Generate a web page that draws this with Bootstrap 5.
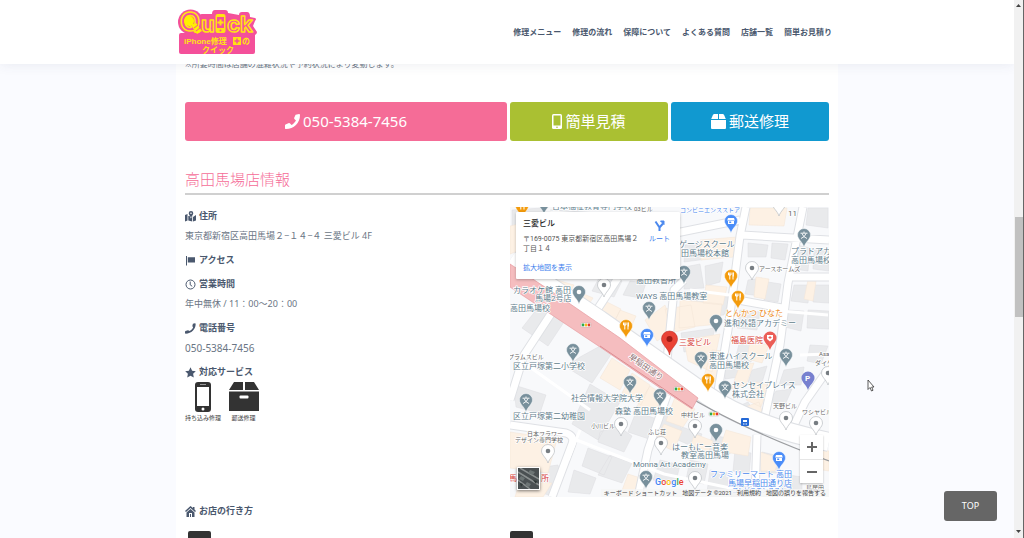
<!DOCTYPE html>
<html lang="ja">
<head>
<meta charset="utf-8">
<meta name="viewport" content="width=device-width, initial-scale=1">
<title>高田馬場店 | iPhone修理のクイック</title>
<link href="https://cdn.jsdelivr.net/npm/bootstrap@5.3.0/dist/css/bootstrap.min.css" rel="stylesheet">
<style>
  :root { --ink: #4a586e; --body: #6a7584; --pink: #f56c97; }
  body { font-family: "Noto Sans", "Noto Sans CJK JP", sans-serif; background: #fafbff; color: var(--body); font-size: 9px; line-height: 20px; }
  a { text-decoration: none; }
  .site-width { width: 100%; max-width: 662px; margin-left: auto; margin-right: auto; }
  .page-frame { height: 100vh; overflow: hidden; padding-right: 10px; }
  .site-header { background: #fff; height: 64px; box-shadow: 0 0 12px rgba(60,70,100,.1); z-index: 5; flex: none; }
  .site-bar { padding-right: 6px; }
  .site-nav { gap: 11px; }
  .site-nav a { color: var(--ink); font-size: 8px; font-weight: 700; white-space: nowrap; }
  .sheet { background: #fff; padding: 0 9px; margin-top: -10px; flex: 1 0 auto; }
  .notice { font-size: 8px; }
  .halves { display: flex; gap: 3px; }
  .halves > :first-child { flex: 0 0 50%; }
  .halves > :not(:first-child) { flex: 1 1 0; min-width: 0; }
  .cta-row { margin-top: 28px; }
  .cta { height: 39px; border: 0; border-radius: 3px; color: #fff; font-size: 15px; gap: 3px; padding: 0; }
  .cta:hover { color: #fff; }
  .cta-tel { background: var(--pink); }
  .cta-quote { background: #aac032; }
  .cta-post { background: #1199d0; }
  .shop-title { color: var(--pink); font-size: 15px; font-weight: 300; line-height: 28px; margin: 24px 0 0; border-bottom: 2px solid #d0d0d0; }
  .facts { padding-top: 7px; }
  .facts h3, .way h3 { display: flex; align-items: center; gap: 3px; font-size: 9px; line-height: 20px; font-weight: 700; color: var(--ink); margin: 4px 0 0; }
  .facts h3 svg, .way h3 svg { width: 11px; height: 11px; margin-top: 1px; }
  .facts p { margin: 0; }
  .facts .tel-no { font-size: 10px; }
  .services { gap: 6px; }
  .service { width: 35px; font-size: 6px; line-height: 12px; white-space: nowrap; text-align: center; color: #444; }
  .service svg { display: block; width: 30px; height: 30px; margin: 0 auto; }
  .map-box { height: 290px; margin-top: 12px; overflow: hidden; background: #f8f9fb; font-family: Roboto, "Noto Sans CJK JP", sans-serif; }
  .map-box > svg { width: 100%; height: 100%; display: block; }
  .place { left: 6px; top: 5px; width: 164px; height: 67px; background: #fff; border-radius: 1px; box-shadow: 0 1px 3px rgba(0,0,0,.25); font-size: 7px; line-height: 10px; color: #555; padding: 6px 7px; }
  .place strong { display: block; font-size: 8px; line-height: 12px; font-weight: 500; color: #222; }
  .place address { width: 118px; margin: 4px 0 9px; line-height: 10px; }
  .place a { color: #3b7ded; }
  .route { right: 10px; top: 8px; text-align: center; }
  .route svg { display: block; width: 11px; height: 11px; margin: 0 auto 3px; }
  .zoomer { right: 6px; bottom: 14px; width: 23px; background: #fff; box-shadow: 0 1px 2px rgba(0,0,0,.25); }
  .zoomer button { border: 0; background: none; height: 24px; padding: 0; display: flex; align-items: center; justify-content: center; width: 100%; }
  .zoomer button + button { border-top: 1px solid #e6e6e6; }
  .sat { left: 7px; bottom: 7px; width: 23px; height: 23px; padding: 0; border: 1px solid #fff; box-shadow: 0 1px 3px rgba(0,0,0,.5); }
  .sat svg { display: block; width: 100%; height: 100%; }
  .legal { right: 0; bottom: 0; font-size: 6px; line-height: 8px; gap: 5px; padding: 0 3px; background: rgba(245,245,245,.75); white-space: nowrap; }
  .legal a, .legal span, .legal button { color: #444; border: 0; background: none; padding: 0; }
  .way { min-height: 48px; }
  .step { width: 23px; height: 12px; border-radius: 2px; background: #333; margin-left: 3px; }
  .step-row { margin-top: 10px; }
  .step-row .halves > :last-child .step { margin-left: 0; }
  .to-top { position: fixed; right: 27px; bottom: 17px; width: 53px; height: 30px; border: 0; border-radius: 3px; background: #666; color: #fff; font-size: 9px; padding: 0; }
  .scroll-track { position: fixed; top: 0; right: 0; width: 10px; height: 100vh; background: #f1f1f1; border-right: 1px solid #666; z-index: 6; }
  .scroll-thumb { position: absolute; top: 40.4%; height: 18.6%; left: 1px; right: 0; background: #c1c1c1; }
  .scroll-track svg { position: absolute; left: 2px; width: 5px; height: 4px; }
  .scroll-track .arrow-up { top: 4px; }
  .scroll-track .arrow-down { bottom: 4px; }
  .pointer { position: fixed; left: 84.7%; top: 70.4%; width: 8px; height: 13px; }
</style>
</head>
<body>
<div class="page-frame d-flex flex-column">
  <header class="site-header position-relative">
    <div class="site-width site-bar h-100 d-flex align-items-center justify-content-between">
      <a href="#" aria-label="Quick iPhone修理のクイック">
        <svg class="d-block" width="82" height="48" viewBox="0 0 82 48">
          <g fill="#f4509a">
            <circle cx="14.500" cy="14" r="12.500"/>
            <rect x="3" y="25" width="76" height="21" rx="2"/>
            <path d="M24 7q0-1 2-1h10q0-4 3-4h10q3 0 3 3l11 2q0-3 3-3h5q3 0 3 5l5 1q2 1 0 3l-2 5 4 6q0 2-2 3H22z"/>
          </g>
          <g font-family="Inter, sans-serif" font-weight="700" fill="#f4509a" stroke="#ffe312" stroke-width="1.500" stroke-linejoin="round">
            <text x="4" y="23" font-size="26">Q</text>
            <text x="25" y="24" font-size="22">u</text>
            <text x="51" y="24" font-size="22">c</text>
            <text x="64" y="24" font-size="22">k</text>
          </g>
          <circle cx="13" cy="13" r="5" fill="#fff000"/><path d="m15 17 5-2 6 8-5 3z" fill="#fff000"/><path d="m18 20 4-3M20 23l4-3" stroke="#f4509a"/>
          <rect x="39.500" y="6" width="10" height="19" rx="2" fill="#ffe312"/><rect x="41" y="9" width="7" height="11" fill="#f4509a"/><path d="M44.500 11.500v6M41.500 14.500h6" stroke="#ffe312" stroke-width="2"/><circle cx="44.500" cy="22.500" r="1" fill="#f4509a"/>
          <g font-family="'Liberation Sans', 'Noto Sans CJK JP', sans-serif" font-weight="700" fill="#ffe312">
            <text x="8" y="36" font-size="8">iPhone修理</text><text x="66" y="36" font-size="8">の</text>
            <text x="26" y="45" font-size="8">クイック</text>
          </g>
          <rect x="57" y="29" width="8" height="8" fill="#ffe312"/><path d="M61 30.500v5M58.500 33h5" stroke="#f4509a" stroke-width="1.500"/>
        </svg>
      </a>
      <nav class="site-nav d-flex">
        <a href="#">修理メニュー</a><a href="#">修理の流れ</a><a href="#">保障について</a><a href="#">よくある質問</a><a href="#">店舗一覧</a><a href="#">簡単お見積り</a>
      </nav>
    </div>
  </header>

  <main class="site-width sheet">
    <p class="notice m-0">※所要時間は店舗の混雑状況や予約状況により変動します。</p>

    <div class="halves cta-row">
      <a class="btn cta cta-tel d-flex align-items-center justify-content-center" href="tel:050-5384-7456">
        <svg width="15" height="15" viewBox="0 0 16 16" fill="#fff"><path d="M11.300.8 15 0q1 0 1 1C16 9.500 9.500 16 1 16q-.8 0-1-.9l-.1-3 .6-1 3.700-1.500 1 .3 1.700 1.800c2-1.100 3.700-2.800 4.800-4.800L10 5.200l-.3-1z"/></svg>
        050-5384-7456</a>
      <a class="btn cta cta-quote d-flex align-items-center justify-content-center" href="#">
        <svg width="10" height="15" viewBox="0 0 10 15"><rect width="10" height="15" rx="1.500" fill="#fff"/><path d="M1.500 1.500h7v10h-7z" fill="#aac032"/><circle cx="5" cy="13.200" r=".8" fill="#aac032"/></svg>
        簡単見積</a>
      <a class="btn cta cta-post d-flex align-items-center justify-content-center" href="#">
        <svg width="15" height="15" viewBox="0 0 15 15" fill="#fff"><path d="M3 0h4v5H.2L2 .7zM8 0h4l1 .7L14.800 5H8zM0 6h15v8q0 1-1 1H1q-1 0-1-1z"/></svg>
        郵送修理</a>
    </div>

    <h2 class="shop-title">高田馬場店情報</h2>

    <div class="halves">
      <section class="facts">
        <h3><svg viewBox="0 0 11 11" fill="#4a586e"><path d="M0 4 2.500 3v6.500L0 10.500zM3.300 5h1.300l1.300 2.500L7.200 5v5.400L3.300 9.500zM8 6l3-2v5.500l-3 1z"/><path d="M6 0a2.300 2.300 0 0 1 2.300 2.300Q8 4.500 6 6.500 4 4.500 3.700 2.300A2.300 2.300 0 0 1 6 0zm0 1.500a.8.8 0 1 0 0 1.600.8.800 0 0 0 0-1.600z" fill-rule="evenodd"/></svg>住所</h3>
        <p>東京都新宿区高田馬場２−１４−４ 三愛ビル 4F</p>
        <h3><svg viewBox="0 0 11 11" fill="#4a586e"><path d="M1 1h1v9.500H1zM2.800 2.200h7.200v5.300H2.800z"/></svg>アクセス</h3>
        <h3><svg viewBox="0 0 11 11" fill="none" stroke="#4a586e"><circle cx="5.500" cy="5.500" r="4.500"/><path d="M5.200 2.500v3.300l2 1.500"/></svg>営業時間</h3>
        <p>年中無休 / 11：00～20：00</p>
        <h3><svg viewBox="0 0 16 16" fill="#4a586e"><path d="m11.500 1 3-.7q1 0 1 1C15.500 9 9.500 15 1 15.500q-.8 0-1-.9v-2l.6-1 3.700-1 1 .3 1.500.8c2.200-1.100 4-2.900 5-5L11 5.200l-.3-1z"/></svg>電話番号</h3>
        <p class="tel-no">050-5384-7456</p>
        <h3><svg viewBox="0 0 11 11" fill="#4a586e"><path d="m5.500.3 1.600 3.400 3.700.5-2.700 2.600.7 3.700-3.300-1.800-3.300 1.800.7-3.700L.2 4.200l3.700-.5z"/></svg>対応サービス</h3>
        <div class="services d-flex">
          <div class="service"><svg viewBox="0 0 30 30"><rect x="7" y="0" width="16" height="30" rx="3" fill="#333"/><path d="M9 5h12v19H9z" fill="#fff"/><path d="M12 2.500h6" stroke="#999"/><circle cx="15" cy="27" r="1.500" fill="#fff"/></svg>持ち込み修理</div>
          <div class="service"><svg viewBox="0 0 30 30"><path d="M5 0h9v8H0zM16 0h9l5 8H16zM0 9.500h30V29H0z" fill="#333"/><rect x="10.500" y="13.500" width="9" height="3" rx="1" fill="#fff"/></svg>郵送修理</div>
        </div>
      </section>

      <div class="map-box position-relative">
        <svg viewBox="510 207 319 290" preserveAspectRatio="xMidYMid slice" role="img" aria-label="三愛ビル周辺の地図">
          <defs>
            <path id="drop" d="M0-6.500A6.500 6.500 0 0 1 6.500 0C6.500 4 1.500 7 0 12-1.500 7-6.500 4-6.500 0A6.500 6.500 0 0 1 0-6.500z"/>
            <g id="school"><use href="#drop" fill="#78909c" stroke="#fff" stroke-width=".5"/><path d="M0-3.500v1.500M-3.500-1.800h7M-2-1.500q1 3.500 5 5M2-1.500q-1 3.500-5 5" stroke="#fff" stroke-width=".9" fill="none"/></g>
            <g id="spot"><use href="#drop" fill="#78909c" stroke="#fff" stroke-width=".5"/><circle r="2.300" fill="#fff"/></g>
            <g id="plain"><use href="#drop" fill="#fff" stroke="#b9bdc1" stroke-width=".7"/><circle r="2.300" fill="#777d82"/></g>
            <g id="food"><use href="#drop" fill="#f39b0c" stroke="#fff" stroke-width=".5"/><path d="M-2.500-3.500v2.500h2.500v-2.500M-1.200-3.500v7M2-3.500v7M2.300-3.500v4" stroke="#fff" fill="none"/></g>
            <g id="store"><use href="#drop" fill="#4b8df8" stroke="#fff" stroke-width=".5"/><path d="M-3-3h6l.8 2.500h-7.600zM-3 0h6v3h-6z" fill="#fff"/><path d="M-1.800.5h2v1.500h-2z" fill="#4b8df8"/></g>
            <g id="signal"><rect x="-5" y="-2" width="10" height="4" rx="1" fill="#fff" stroke="#aaa" stroke-width=".4"/><circle cx="-3" r="1.400" fill="#2da94f"/><circle r="1.400" fill="#f6b91c"/><circle cx="3" r="1.400" fill="#e5372c"/></g>
          </defs>
          <path fill="#f8f9fb" d="M510 207h319v290H510z"/>
          <g fill="#e9eaec" stroke="#dcdde0" stroke-width=".5">
            <path d="m540 305 24 17-16 24-26-18zM580 357l22-12 10 8-20 30-26-16zM514 385l32 10-6 18-24-6zM512 210l30-2 2 14-32 4zM590 384l30 18-22 38-26-16zM636 412l24 8-8 20-24-8zM600 432l18-6 14 10-8 16-26-10zM588 448l24 9-8 18-22-9zM574 470l22 8-6 16-22-2zM610 455l22 8-10 20-24-8zM536 468l22-3 3 14-12 16-15-4z"/>
            <path d="m685 245 40-6-3 18-38 5zM684 267l16-3 4 24-20 1zM705 266l18-4-3 20-14 4zM690 295l40 2-6 18-34 3zM681 333l34-5-5 20-26 4zM748 243l20 2-2 12-18 0zM772 243l16 1-3 16-14-2zM748 280l14-2-2 18-15-2zM768 282l13 2-3 18-14-2zM740 310l20 2-3 18-20-2zM740 340l16 2-5 20-16-2zM752 370l15-4-6 20-13-4z"/>
            <path d="m808 208 20 0v20l-22-3zM797 245l13 3-2 23-14-2zM814 250l15 1v20l-16-2zM794 285l16 0-2 18-17-2zM814 285l15 0v18l-16-1zM788 310l16 1-3 20-16-4zM808 310l21 1v18l-22-1zM784 370l20-3-3 18-22 0zM810 345l18 1-7 18-14-3zM776 391l16-2-8 18-15-5zM730 410l18-8 8 13-11 7zM724 365l18-4-3 16-14 2zM664 410l20 5-5 20-23-10zM682 427l20 7-6 14-18-8zM712 435l20 4-2 15-22-3zM735 450l16 3-2 22-16-4zM762 452l17 4-2 17-16 0zM782 474l20 3v18l-21-1zM660 460l20 5-5 20-22-5zM690 460l18 4-4 20-18-4zM710 470l18 3-1 20-20-1zM733 480l18 2v15l-20 0zM600 276l22 5-8 16-22-6zM630 281l16 2-5 15-18-3z"/>
          </g>
          <g fill="#fdf1e4" stroke="#f3e5d6" stroke-width=".5">
            <path d="m510 226 18-4 10 22-28 10zM550 278l24 7-9 17-23-14zM575 290l18 8-12 18-18-10zM603 300l18 9-12 22-21-12zM620 310l16 6-10 23-17-6zM645 320l20-15 10 24-18 12zM612 358l18 12-10 20-20-12zM632 373l18 12-9 20-19-12zM650 386l15 10-13 18-15-8zM665 309l26-4 4 22-24 6zM706 285l21 2-4 18-20-2zM680 300l42 4-3 20-40 4zM684 340l36-6-8 38-24-11zM750 208l37 0-3 18-35-1zM700 240l37-3-3 20-33 3zM756 277l13 2-4 20-11-2zM808 280l8 1-3 20-9-2zM750 342l19 3-7 18-15-4zM712 350l14 1-5 30-17-5zM740 365l14-2-8 22-15 4zM756 382l13 3-8 22-15-7zM510 432l47 7-9 34-38-5zM664 424l18 7-8 20-20-9zM695 434l18 7-8 19-17-9zM726 430l25 7-3 19-29-5zM760 452l19 6-4 13-14 0zM807 448l22 3v20l-25-4zM628 474l16 5-4 18-20-1zM675 397l20 12-12 18-17-6zM745 407l14-5 7 20-12 3zM520 480l32 3-9 14h-28z"/>
          </g>
          <g fill="none" stroke-linejoin="round">
            <g stroke="#dfe1e5" stroke-width="9">
              <path d="M746 207 740 236 728 330 716 403M803 207 788 283 780 345 763 425M742 235l87 5M792 277h37M738 300l44 8M676 233l64-13M562 297l-38 58-14 45M510 425l56 8q9 3 6 11l-20 53M684 280l-10 10-8 80M667 395l-19 55-10 47M757 435l-2 62M829 368l-24 34-18 38M550 214l130 8M618 278l-25 38"/>
            </g>
            <g stroke="#fff" stroke-width="7">
              <path d="M746 207 740 236 728 330 716 403M803 207 788 283 780 345 763 425M742 235l87 5M792 277h37M738 300l44 8M676 233l64-13M562 297l-38 58-14 45M510 425l56 8q9 3 6 11l-20 53M684 280l-10 10-8 80M667 395l-19 55-10 47M757 435l-2 62M829 368l-24 34-18 38M550 214l130 8M618 278l-25 38"/>
              <path stroke-width="3" d="M574 439l90 35 85 18M690 290l40 5M520 360l70 50M768 310l60 5M580 430l-12 30M800 355l28-1"/>
            </g>
            <path d="M510 260 600 320 667 367 708 396Q750 425 829 442" stroke="#dfe1e5" stroke-width="20"/>
            <path d="M510 260 600 320 667 367 708 396Q750 425 829 442" stroke="#fff" stroke-width="18"/>
            <path d="M665 382Q730 425 829 461" stroke="#9b9da0" stroke-width="1.300"/>
          </g>
          <path d="m510 264 50 33 60 41 78 60-6 11-32-21-60-41-90-60z" fill="#f5bdbf" stroke="#e79ca0" stroke-width=".7"/>
          <path d="m600 346 92 62" stroke="#dc8d92"/>
          <g fill="#5f7d8c" stroke="#fff" stroke-width="1.600" stroke-linejoin="round" paint-order="stroke" font-size="8">
            <text x="552" y="209">日本福祉教育専門学校</text>
            <text x="513" y="293">カラオケ館 高田</text><text x="535" y="301">馬場2号店</text><text x="510" y="311">高田馬場校</text>
            <text x="636" y="299">WAYS 高田馬場教室</text><text x="636" y="283">高田教習所</text>
            <text x="679" y="247">ゲージスクール</text><text x="681" y="256">田馬場校本館</text>
            <text x="791" y="254">プラドアカ</text><text x="791" y="263">高田馬場校</text>
            <text x="724" y="326">進和外語アカデミー</text>
            <text x="513" y="369">区立戸塚第二小学校</text><text x="571" y="401">社会情報大学院大学</text>
            <text x="513" y="419">区立戸塚第二幼稚園</text><text x="615" y="414">森塾 高田馬場校</text>
            <text x="709" y="359">東進ハイスクール</text><text x="709" y="368">高田馬場校</text>
            <text x="732" y="388">センセイプレイス</text><text x="732" y="397">株式会社</text>
            <text x="672" y="450">はーもにー音楽</text><text x="681" y="458">教室高田馬場</text>
            <text x="633" y="467">Monna Art Academy</text>
            <g fill="#666" font-size="6">
              <text x="634" y="211">03ビル</text><text x="759" y="271">アースホームズ</text><text x="508" y="359">プラムスビル</text><text x="591" y="428">小川ビル</text>
              <text x="527" y="436">日本フラワー</text><text x="515" y="442">デザイン専門学校</text><text x="648" y="434">ふじ荘</text><text x="681" y="417">中村ビル</text>
              <text x="773" y="408">天野ビル</text><text x="802" y="414">ワシヤビル</text><text x="819" y="356">Asa</text><text x="815" y="365">ダイケ</text><text x="806" y="490">鳥居田</text><text x="788" y="216" font-size="8">11</text>
            </g>
            <g fill="#d8433b"><text x="679" y="345">三愛ビル</text><text x="731" y="343">福島医院</text><text x="509" y="481">馬場</text><text x="541" y="481">所</text></g>
            <g fill="#ed8a19"><text x="725" y="316">とんかつ ひなた</text></g>
            <g fill="#4b88ee"><text x="680" y="212" font-size="6">コンビニエンスストア</text><text x="710" y="477">ファミリーマート 高田</text><text x="728" y="486">馬場早稲田通り店</text><text x="732" y="492" font-size="6">コンビニエンスストア</text></g>
            <text transform="translate(628 358) rotate(35)" fill="#8a6d70">早稲田通り</text>
          </g>
          <use href="#food" x="522" y="206"/><use href="#school" x="544" y="202"/><use href="#spot" x="579" y="292"/><use href="#school" x="649" y="308"/><use href="#food" x="626" y="326"/><use href="#store" x="647" y="335"/><use href="#plain" x="604" y="285"/><use href="#school" x="573" y="350"/>
          <use href="#store" x="731" y="221"/><use href="#plain" x="779" y="204"/><use href="#school" x="804" y="235"/><use href="#plain" x="752" y="268"/><use href="#food" x="731" y="276"/><use href="#school" x="684" y="272"/><use href="#food" x="738" y="297"/><use href="#spot" x="716" y="321"/>
          <use href="#school" x="630" y="382"/><use href="#school" x="660" y="395"/><use href="#school" x="526" y="400"/><use href="#plain" x="621" y="424"/><use href="#plain" x="661" y="443"/><use href="#plain" x="548" y="451"/><use href="#school" x="646" y="477"/>
          <use href="#school" x="701" y="358"/><use href="#school" x="786" y="355"/><use href="#food" x="708" y="380"/><use href="#school" x="725" y="387"/><use href="#plain" x="786" y="418"/><use href="#plain" x="816" y="423"/><use href="#plain" x="695" y="426"/><use href="#spot" x="716" y="430"/><use href="#store" x="779" y="458"/><use href="#plain" x="695" y="478"/><use href="#plain" x="828" y="373"/>
          <use href="#signal" x="586" y="325"/><use href="#signal" x="679" y="389"/><use href="#signal" x="714" y="414"/>
          <g transform="translate(770 338)"><use href="#drop" fill="#eb5e57"/><path d="M-3-3h6v4L0 3.500-3 1z" fill="#fff"/><path d="M0-2v3M-1.500-.5h3" stroke="#eb5e57"/></g>
          <g transform="translate(808 378)"><use href="#drop" fill="#7780cf"/><text x="-3" y="3" font-size="8" font-weight="700" fill="#fff">P</text></g>
          <rect x="741" y="418" width="8" height="8" rx="1" fill="#2469d6"/><path d="M743 420h4v2h-4zM743 423.500h1.500v1H743zM745.500 423.500h1.500v1h-1.500z" fill="#fff"/>
          <path d="M669.500 331a8 8 0 0 1 8 8c0 6-7 9-8 16-1-7-8-10-8-16a8 8 0 0 1 8-8z" fill="#ea4335" stroke="#b3261e" stroke-width=".5"/><circle cx="669.500" cy="339" r="3" fill="#9e1b14"/>
          <text x="655" y="485" font-size="9" font-weight="500" stroke="#fff" stroke-width="1" paint-order="stroke"><tspan fill="#4285f4">G</tspan><tspan fill="#ea4335">o</tspan><tspan fill="#fbbc05">o</tspan><tspan fill="#4285f4">g</tspan><tspan fill="#34a853">l</tspan><tspan fill="#ea4335">e</tspan></text>
        </svg>

        <div class="place position-absolute">
          <strong>三愛ビル</strong>
          <address>〒169-0075 東京都新宿区高田馬場２丁目１４</address>
          <a href="#">拡大地図を表示</a>
          <a class="route position-absolute" href="#"><svg viewBox="0 0 11 11" fill="none" stroke="#4b88ee" stroke-width="2"><path d="M5.500 11V7.500L9 3.500M5.500 7.500 1.500 1.500"/><path d="M6.500 1H10v3.500z" fill="#4b88ee" stroke-width="1"/></svg>ルート</a>
        </div>
        <button class="sat position-absolute" type="button" aria-label="航空写真"><svg viewBox="0 0 21 21"><path fill="#4a5052" d="M0 0h21v21H0z"/><path d="m0 4 21 13M2 0l19 11M0 12l12 9" stroke="#8b9090" stroke-width="1.500"/><path d="M12 2l5 2-2 3-5-2zM3 8l4 2-2 3-4-2zM9 14l4 2-2 3-4-2z" fill="#6d7575"/><path d="M2 15l3 1-2 3zM15 12l4 1-1 3z" fill="#2d3635"/></svg></button>
        <div class="zoomer position-absolute">
          <button type="button" aria-label="拡大"><svg width="10" height="10"><path d="M5 0v10M0 5h10" stroke="#666" stroke-width="2"/></svg></button>
          <button type="button" aria-label="縮小"><svg width="10" height="10"><path d="M0 5h10" stroke="#666" stroke-width="2"/></svg></button>
        </div>
        <div class="legal position-absolute d-flex"><button type="button">キーボード ショートカット</button><span>地図データ ©2021</span><a href="#">利用規約</a><a href="#">地図の誤りを報告する</a></div>
      </div>
    </div>

    <section class="way">
      <h3><svg viewBox="0 0 11 11" fill="#4a586e"><path d="M5.500 0 8 2V1h1.500v2.500L11 5 10 6 5.500 2 1 6 0 5zM1.500 6.500l4-3.500 4 3.500V11h-8zM4 7v4h1V8h1v3h1V7z" fill-rule="evenodd"/></svg>お店の行き方</h3>
      <div class="step-row"><div class="halves"><div><div class="step"></div></div><div><div class="step"></div></div></div></div>
    </section>
  </main>
</div>

<button class="to-top" type="button">TOP</button>
<div class="scroll-track" aria-hidden="true">
  <svg class="arrow-up" viewBox="0 0 5 4"><path d="M0 3h5L2.500 0z" fill="#444"/></svg>
  <div class="scroll-thumb"></div>
  <svg class="arrow-down" viewBox="0 0 5 4"><path d="M0 0h5L2.500 3z" fill="#444"/></svg>
</div>
<svg class="pointer" viewBox="0 0 8 13" aria-hidden="true"><path d="M1 1v9.500l2-2 1.500 3.500 1.500-.7L4.700 8H7z" fill="#fff" stroke="#333" stroke-width=".8"/></svg>
<script src="https://cdn.jsdelivr.net/npm/bootstrap@5.3.0/dist/js/bootstrap.bundle.min.js"></script>
</body>
</html>
